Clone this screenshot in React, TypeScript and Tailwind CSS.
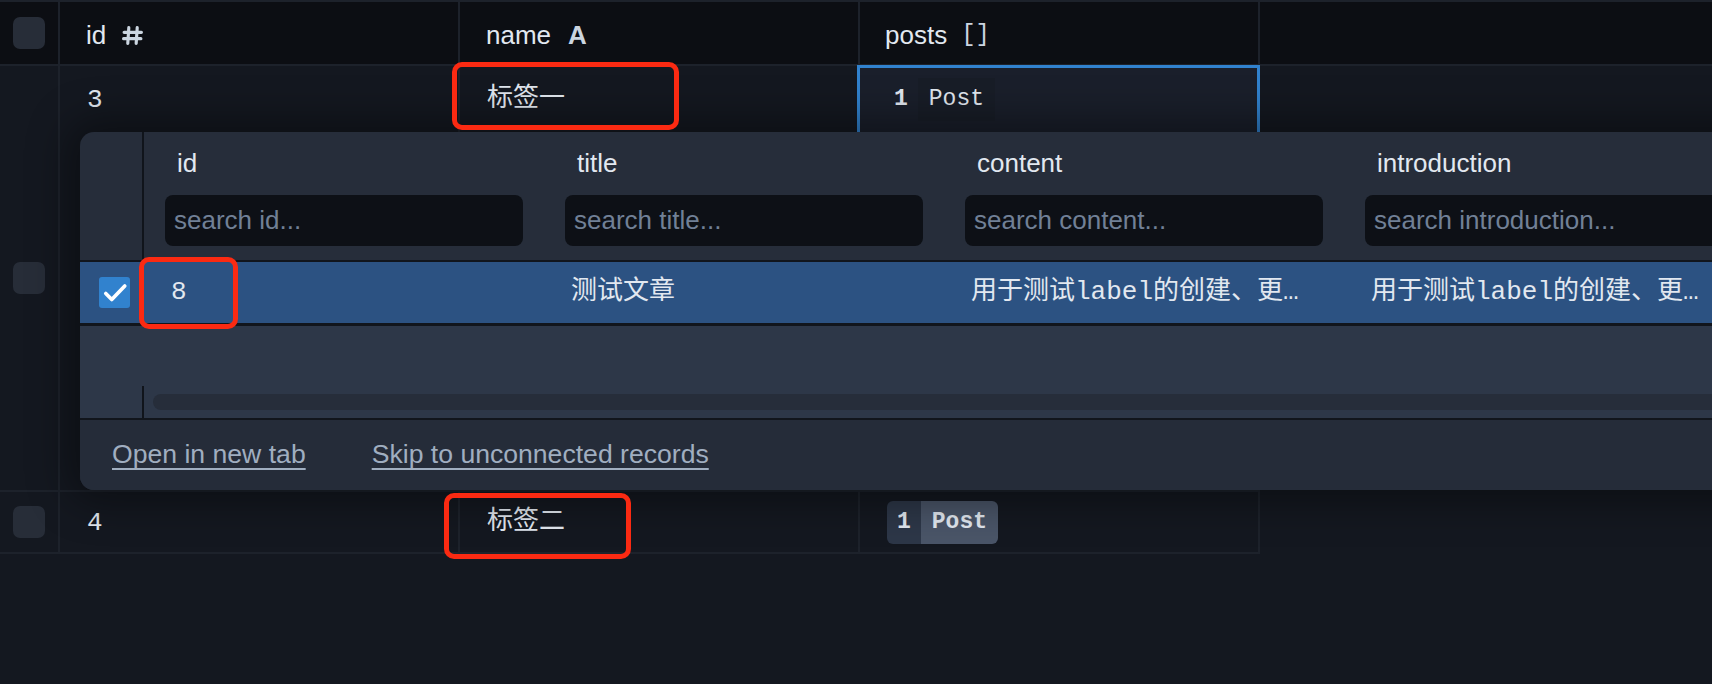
import React from 'react';

const mono = "font-['Liberation_Mono','Noto_Sans_CJK_SC',monospace]";

const popupCols = ['id', 'title', 'content', 'introduction'];

const Checkbox: React.FC<{ checked?: boolean }> = ({ checked }) =>
  checked ? (
    <div className="w-[31px] h-[31px] rounded-[3px] bg-[#3182ce] flex items-center justify-center">
      <svg width="26" height="26" viewBox="0 0 24 24" fill="none">
        <path d="M3.5 12.5l5.5 5.5L21 5.5" stroke="#fff" strokeWidth="3.4" strokeLinecap="round" strokeLinejoin="round" />
      </svg>
    </div>
  ) : (
    <div className="w-[32px] h-[32px] rounded-[7px] bg-[#272d38]" />
  );

// type marker for number columns
const HashIcon = () => (
  <svg width="21" height="21" viewBox="0 0 20 20" className="ml-[16px]" fill="none">
    <path d="M6.5 2.5L5.5 17.5M14.5 2.5L13.5 17.5M2 7h16.5M1.5 13h16.5" stroke="#cbd5e0" strokeWidth="3" strokeLinecap="round" />
  </svg>
);

const Chip: React.FC<{ muted?: boolean }> = ({ muted }) => (
  <div className={`flex h-[43px] rounded-[6px] overflow-hidden text-[23px] ${mono}`}>
    <span className={`px-[10px] flex items-center font-bold ${muted ? '' : 'bg-[#2d3748]'}`}>1</span>
    <span className={`px-[11px] flex items-center ${muted ? 'bg-[#181d27]' : 'bg-[#4a5568] font-bold'}`}>Post</span>
  </div>
);

const RedBox: React.FC<{ className: string }> = ({ className }) => (
  <div className={`absolute border-[5px] border-[#fb2a12] rounded-[10px] pointer-events-none ${className}`} />
);

const App: React.FC = () => {
  return (
    <div className="relative w-[1712px] h-[684px] overflow-hidden bg-[#141820] font-['Liberation_Sans',sans-serif] text-[26px] text-[#e2e8f0]">
      {/* header */}
      <div className="flex h-[66px] bg-[#0c0e13] border-t-2 border-b-2 border-[#1d222b]">
        <div className="w-[60px] shrink-0 border-r-2 border-[#1d222b] flex items-center justify-center">
          <Checkbox />
        </div>
        <div className="w-[400px] shrink-0 border-r-2 border-[#1d222b] flex items-center pl-[26px] pt-[4px]">
          id<HashIcon />
        </div>
        <div className="w-[400px] shrink-0 border-r-2 border-[#1d222b] flex items-center pl-[26px] pt-[4px]">
          name<span className="ml-[17px] font-bold text-[#cbd5e0]">A</span>
        </div>
        <div className="w-[400px] shrink-0 border-r-2 border-[#1d222b] flex items-center pl-[25px] pt-[4px]">
          posts<span className={`ml-[14px] text-[#cbd5e0] text-[24px] ${mono}`}>[]</span>
        </div>
        <div className="flex-1" />
      </div>

      {/* row 3 with relation picker */}
      <div className="relative flex w-[1260px] h-[426px] border-b-2 border-[#1d222b]">
        <div className="w-[60px] shrink-0 border-r-2 border-[#1d222b] flex items-center justify-center">
          <Checkbox />
        </div>
        <div className={`w-[400px] shrink-0 border-r-2 border-[#1d222b] ${mono}`}>
          <div className="h-[66px] flex items-center pl-[27px] pt-[3px]">3</div>
        </div>
        <div className={`w-[400px] shrink-0 border-r-2 border-[#1d222b] ${mono}`}>
          <div className="h-[66px] flex items-center pl-[27px]">标签一</div>
        </div>
        <div className="relative w-[400px] shrink-0 border-r-2 border-[#1d222b]">
          <div className="absolute -left-[3px] -right-[2px] -top-[1px] h-[90px] border-[3px] border-[#3182ce] bg-[#1a1f2b] pl-[24px] pt-[10px]">
            <Chip muted />
          </div>
        </div>

        <div className="absolute left-[80px] top-[66px] w-[1700px] h-[358px] rounded-[14px] overflow-hidden bg-[#262d3a] shadow-[0_0_40px_12px_rgba(0,0,0,0.4)] flex flex-col">
          <div className="flex h-[128px] shrink-0">
            <div className="w-[64px] shrink-0 border-r-2 border-[#10141b]" />
            {popupCols.map((c) => (
              <div key={c} className="w-[400px] shrink-0 px-[21px] pt-[18px]">
                <div className="h-[26px] leading-[26px] pl-[12px] text-[#e2e8f0]">{c}</div>
                <input
                  readOnly
                  placeholder={`search ${c}...`}
                  className="mt-[19px] w-full h-[51px] rounded-[8px] bg-[#0d1016] px-[9px] outline-none text-[26px] placeholder:text-[#718096]"
                />
              </div>
            ))}
          </div>
          <div className="h-[2px] shrink-0 bg-[#11151c]" />
          <div className={`flex items-center h-[61px] shrink-0 bg-[#2c5282] ${mono}`}>
            <div className="w-[64px] shrink-0 pl-[19px]">
              <Checkbox checked />
            </div>
            <div className="w-[400px] shrink-0 px-[27px] truncate">8</div>
            <div className="w-[400px] shrink-0 px-[27px] truncate">测试文章</div>
            <div className="w-[400px] shrink-0 px-[27px] truncate">用于测试label的创建、更新和删除功能</div>
            <div className="w-[400px] shrink-0 px-[27px] truncate">用于测试label的创建、更新和删除功能</div>
          </div>
          <div className="h-[3px] shrink-0 bg-[#11151c]" />
          <div className="h-[60px] shrink-0 bg-[#2d3748]" />
          <div className="flex h-[32px] shrink-0 bg-[#2d3748]">
            <div className="w-[64px] shrink-0 border-r-2 border-[#10141b]" />
            <div className="flex-1 pl-[9px] pt-[8px]">
              <div className="h-[16px] rounded-full bg-[#262d3a]" />
            </div>
          </div>
          <div className="h-[2px] shrink-0 bg-[#11151c]" />
          <div className="flex-1 bg-[#252c39] flex items-center pl-[32px] gap-[66px] text-[26.6px] text-[#a0aec0]">
            <a className="underline underline-offset-[5px] decoration-[2px]">Open in new tab</a>
            <a className="underline underline-offset-[5px] decoration-[2px]">Skip to unconnected records</a>
          </div>
        </div>
      </div>

      {/* row 4 */}
      <div className="flex w-[1260px] h-[62px] border-b-2 border-[#1d222b]">
        <div className="w-[60px] shrink-0 border-r-2 border-[#1d222b] flex items-center justify-center">
          <Checkbox />
        </div>
        <div className={`w-[400px] shrink-0 border-r-2 border-[#1d222b] flex items-center pl-[27px] pt-[3px] ${mono}`}>4</div>
        <div className={`w-[400px] shrink-0 border-r-2 border-[#1d222b] flex items-center pl-[27px] ${mono}`}>标签二</div>
        <div className="w-[400px] shrink-0 border-r-2 border-[#1d222b] flex items-center pl-[27px]">
          <Chip />
        </div>
      </div>

      {/* annotation boxes */}
      <RedBox className="left-[452px] top-[62px] w-[227px] h-[68px]" />
      <RedBox className="left-[139px] top-[257px] w-[99px] h-[72px]" />
      <RedBox className="left-[444px] top-[493px] w-[187px] h-[66px]" />
    </div>
  );
};

export default App;
